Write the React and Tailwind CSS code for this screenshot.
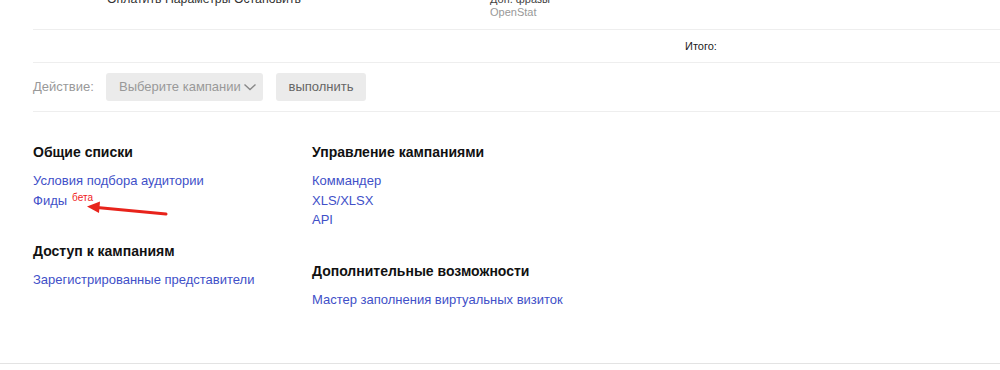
import React from "react";

export default function App() {
  const link = "text-[#4150c8] leading-[19.5px]";
  return (
    <div className="relative w-[1000px] h-[370px] overflow-hidden bg-white font-['Liberation_Sans',Arial,sans-serif] text-[13px] text-[#333]">
      <div className="h-[364px] border-b border-[#e3e3e3]">
        <div className="pl-[33px]">
          {/* top partially visible row */}
          <div className="flex h-[30px] border-b border-[#eeeeee]">
            <div className="w-[457px] pl-[74px] -mt-[8px] leading-[15px] text-[12.3px] text-[#333]">
              Оплатить Параметры Остановить
            </div>
            <div className="-mt-[7px] text-[11px] leading-[13px]">
              <div className="text-[#444]">Доп. фразы</div>
              <div className="text-[#999]">OpenStat</div>
            </div>
          </div>
          {/* total row */}
          <div className="flex items-center h-[33px] border-b border-[#eeeeee]">
            <div className="ml-[652px] text-[11px] text-[#222]">Итого:</div>
          </div>
          {/* action row */}
          <div className="flex items-center h-[49px] border-b border-[#eeeeee]">
            <span className="text-[#999] w-[73px]">Действие:</span>
            <div className="flex items-center justify-between w-[157px] h-[28px] rounded-[3px] bg-[#ebebeb] pl-[13px] pr-[6px] text-[#999]">
              <span>Выберите кампании</span>
              <svg width="14" height="8" viewBox="0 0 14 8">
                <path d="M1.5 1.5 L7 6.5 L12.5 1.5" fill="none" stroke="#888" strokeWidth="1.4" />
              </svg>
            </div>
            <div className="flex items-center justify-center ml-[13px] w-[90px] h-[28px] rounded-[3px] bg-[#ebebeb] text-[#666]">
              выполнить
            </div>
          </div>
          {/* lists */}
          <div className="flex pt-[31px]">
            <div className="w-[279px] flex flex-col">
              <div className="mb-[32px]">
                <div className="text-[14px] font-bold leading-[18px] text-[#111] mb-[10px]">Общие списки</div>
                <div className={link}>Условия подбора аудитории</div>
                <div className={link}>
                  Фиды
                  <span className="ml-[5px] text-[10px] leading-[10px] text-[#f01c1c] align-[4px]">бета</span>
                </div>
              </div>
              <div>
                <div className="text-[14px] font-bold leading-[18px] text-[#111] mb-[10px]">Доступ к кампаниям</div>
                <div className={link}>Зарегистрированные представители</div>
              </div>
            </div>
            <div className="flex flex-col">
              <div className="mb-[32px]">
                <div className="text-[14px] font-bold leading-[18px] text-[#111] mb-[10px]">Управление кампаниями</div>
                <div className={link}>Коммандер</div>
                <div className={link}>XLS/XLSX</div>
                <div className={link}>API</div>
              </div>
              <div>
                <div className="text-[14px] font-bold leading-[18px] text-[#111] mb-[10px]">Дополнительные возможности</div>
                <div className={link}>Мастер заполнения виртуальных визиток</div>
              </div>
            </div>
          </div>
        </div>
      </div>
      {/* annotation arrow */}
      <svg className="absolute left-0 top-0 pointer-events-none" width="1000" height="370">
        <line x1="166" y1="214" x2="97" y2="207.6" stroke="#e8231b" strokeWidth="3" strokeLinecap="round" />
        <polygon points="87,206.5 100,201.5 99,213" fill="#e8231b" />
      </svg>
    </div>
  );
}
